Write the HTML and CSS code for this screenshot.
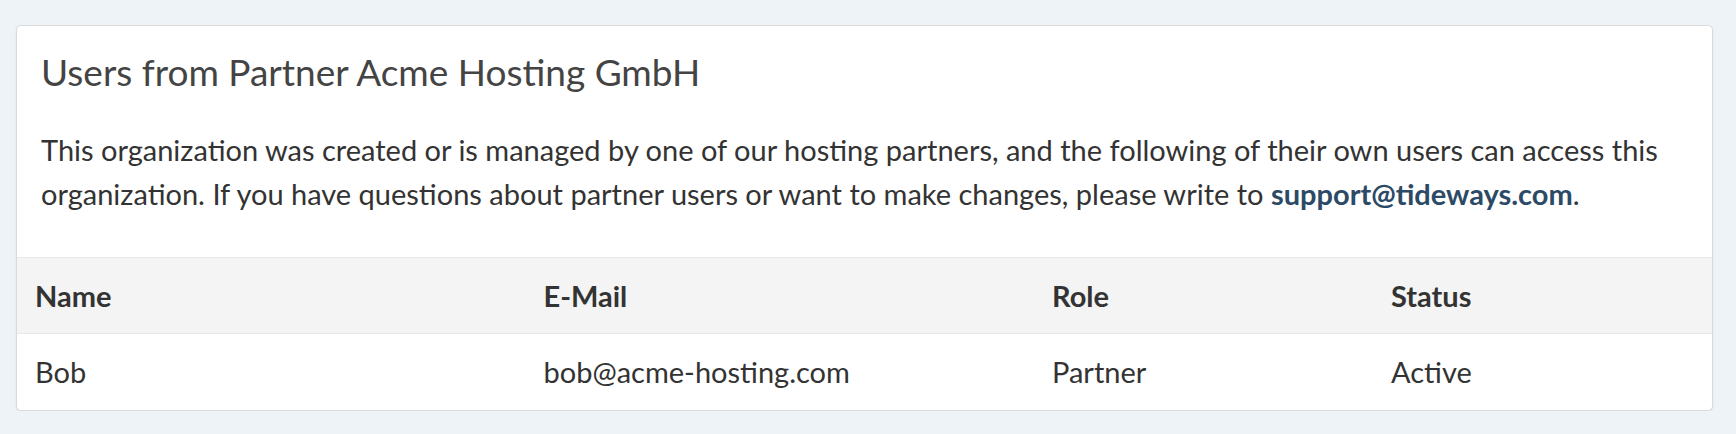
FILE: index.html
```html
<!DOCTYPE html>
<html lang="en">
<head>
  <meta charset="UTF-8">
  <meta name="viewport" content="width=device-width, initial-scale=1.0">
  <title>Partner Users</title>
  <link rel="stylesheet" href="styles.css">
</head>
<body>

  <!-- PARTNER USERS -->
  <div class="panel">
    <div class="panel-body">
      <h2 class="panel-title">Users from Partner Acme Hosting GmbH</h2>
      <p class="intro">
        This organization was created or is managed by one of our hosting partners, and the following of their own users can access this
        organization. If you have questions about partner users or want to make changes, please write to
        <a href="mailto:support@tideways.com">support@tideways.com</a>.
      </p>
    </div>

    <table class="users">
      <thead>
        <tr>
          <th class="col-name">Name</th>
          <th class="col-mail">E-Mail</th>
          <th class="col-role">Role</th>
          <th class="col-status">Status</th>
        </tr>
      </thead>
      <tbody>
        <tr>
          <td>Bob</td>
          <td>bob@acme-hosting.com</td>
          <td>Partner</td>
          <td>Active</td>
        </tr>
      </tbody>
    </table>
  </div>

</body>
</html>
```

FILE: styles.css
```css
* {
  box-sizing: border-box;
  margin: 0;
  padding: 0;
}

body {
  font-family: Lato, 'Open Sans', sans-serif;
  background: #eef3f7;
  color: #333;
  padding: 25px 23px 0 16px;
}

.panel {
  background: #fff;
  border: 1px solid #dadada;
  border-radius: 5px;
  box-shadow: 0 1px 2px rgba(0, 0, 0, 0.08);
  overflow: hidden;
}

.panel-body {
  padding: 24px 24px 41px;
}

.panel-title {
  font-size: 37px;
  font-weight: 400;
  line-height: 44px;
  color: #444;
}

.intro {
  margin-top: 34px;
  font-size: 29px;
  line-height: 44px;
}

.intro a {
  color: #2c4a66;
  font-weight: 700;
  text-decoration: none;
}

.users {
  width: 100%;
  border-collapse: collapse;
  font-size: 29px;
}

.users th,
.users td {
  text-align: left;
  padding: 0 18px;
  height: 76px;
}

.users th {
  background: #f4f4f4;
  font-weight: 700;
  border-top: 1px solid #e8e8e8;
  border-bottom: 1px solid #e8e8e8;
}

.col-name { width: 30%; }
.col-mail { width: 30%; }
.col-role { width: 20%; }
.col-status { width: 20%; }
```
